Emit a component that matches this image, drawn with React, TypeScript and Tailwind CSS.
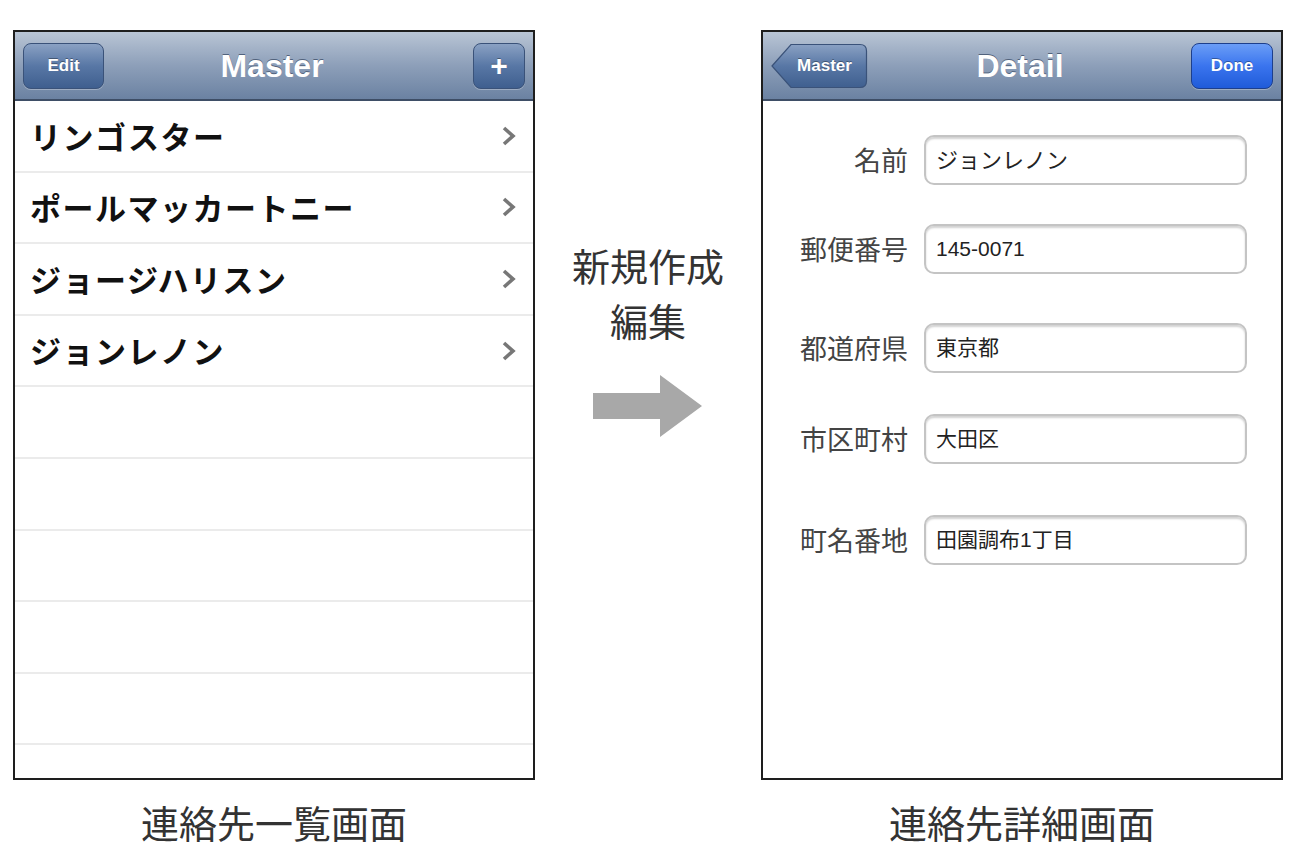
import React from "react";

const jp = "font-['Noto_Sans_CJK_JP',sans-serif]";
const ui = "font-['Liberation_Sans','Noto_Sans_CJK_JP',sans-serif]";

const names = ["リンゴスター", "ポールマッカートニー", "ジョージハリスン", "ジョンレノン"];

const fields = [
  { label: "名前", value: "ジョンレノン", gap: "", size: "text-[22px]" },
  { label: "郵便番号", value: "145-0071", gap: "mt-[39px]", size: "text-[21px]" },
  { label: "都道府県", value: "東京都", gap: "mt-[49px]", size: "text-[21px]" },
  { label: "市区町村", value: "大田区", gap: "mt-[41px]", size: "text-[21px]" },
  { label: "町名番地", value: "田園調布1丁目", gap: "mt-[51px]", size: "text-[21px]" },
];

function NavBar({ title, left, right }: { title: string; left: React.ReactNode; right: React.ReactNode }) {
  return (
    <div className="h-[69px] shrink-0 grid grid-cols-[1fr_auto_1fr] items-center px-[8px] bg-gradient-to-b from-[#b9c5d5] via-[#8d9fb9] to-[#6b82a2] border-b-2 border-[#3e4e66]">
      <div className="justify-self-start">{left}</div>
      <div className={`${ui} text-[32px] font-bold text-white [text-shadow:0_-1px_0_#51627c] -translate-x-[2px]`}>{title}</div>
      <div className="justify-self-end">{right}</div>
    </div>
  );
}

function BarButton({ children, blue, w }: { children: React.ReactNode; blue?: boolean; w: string }) {
  return (
    <div
      className={`${w} h-[46px] rounded-[8px] border flex items-center justify-center ${ui} font-bold text-white [text-shadow:0_-1px_0_rgba(0,0,0,0.35)] shadow-[0_1px_0_rgba(255,255,255,0.3)] ${
        blue
          ? "border-[#1d3f8c] bg-gradient-to-b from-[#6b9df6] via-[#3a74ee] to-[#1f5bd9]"
          : "border-[#3a5279] bg-gradient-to-b from-[#8aa1c3] via-[#5877a5] to-[#3f5f8f]"
      }`}
    >
      {children}
    </div>
  );
}

function BackButton() {
  return (
    <div className="relative w-[97px] h-[46px] flex items-center justify-center pl-[10px]">
      <svg className="absolute inset-0" width="97" height="46" viewBox="0 0 97 46">
        <defs>
          <linearGradient id="bb" x1="0" y1="0" x2="0" y2="1">
            <stop offset="0" stopColor="#8aa1c3" />
            <stop offset="0.5" stopColor="#5877a5" />
            <stop offset="1" stopColor="#3f5f8f" />
          </linearGradient>
        </defs>
        <path d="M1 23 L20 1.5 H89 Q95.5 1.5 95.5 8 V38 Q95.5 44.5 89 44.5 H20 Z" fill="url(#bb)" stroke="#3a5279" strokeWidth="1.2" />
      </svg>
      <span className={`relative ${ui} text-[17px] font-bold text-white [text-shadow:0_-1px_0_rgba(0,0,0,0.35)]`}>Master</span>
    </div>
  );
}

function Chevron() {
  return (
    <svg width="16" height="22" viewBox="0 0 16 22">
      <polyline points="3,3 12,11 3,19" fill="none" stroke="#777" strokeWidth="3.6" />
    </svg>
  );
}

function MasterScreen() {
  return (
    <div className="w-[522px] h-[750px] border-2 border-[#1e1e1e] flex flex-col bg-white overflow-hidden">
      <NavBar
        title="Master"
        left={<BarButton w="w-[81px]"><span className="text-[17px]">Edit</span></BarButton>}
        right={<BarButton w="w-[52px]"><span className="text-[30px] leading-none">+</span></BarButton>}
      />
      {Array.from({ length: 10 }, (_, i) => (
        <div key={i} className="h-[71.6px] shrink-0 border-b-2 border-[#ebebeb] flex items-center justify-between pl-[15px] pr-[16px]">
          <span className={`${jp} text-[31px] font-bold text-[#111] tracking-[1.5px]`}>{names[i] ?? ""}</span>
          {names[i] && <Chevron />}
        </div>
      ))}
    </div>
  );
}

function DetailScreen() {
  return (
    <div className="w-[522px] h-[750px] border-2 border-[#1e1e1e] flex flex-col bg-white overflow-hidden">
      <NavBar
        title="Detail"
        left={<BackButton />}
        right={<BarButton blue w="w-[82px]"><span className="text-[17px]">Done</span></BarButton>}
      />
      <div className="flex flex-col pt-[34px]">
        {fields.map((f) => (
          <div key={f.label} className={`flex items-center gap-[16px] ${f.gap}`}>
            <div className={`w-[145px] text-right ${jp} text-[27px] text-[#444]`}>{f.label}</div>
            <div className="w-[323px] h-[50px] rounded-[10px] border-2 border-[#c4c4c4] shadow-[inset_0_2px_2px_rgba(0,0,0,0.18)] flex items-center px-[10px]">
              <span className={`${ui} ${f.size} text-[#222]`}>{f.value}</span>
            </div>
          </div>
        ))}
      </div>
    </div>
  );
}

export default function App() {
  return (
    <div className="w-[1300px] h-[867px] bg-white flex pt-[30px] pl-[13px]">
      <div className="flex flex-col items-center">
        <MasterScreen />
        <div className={`${jp} text-[38px] leading-[48px] text-[#333] mt-[18px]`}>連絡先一覧画面</div>
      </div>

      <div className="w-[226px] flex flex-col items-center pt-[207px]">
        <div className={`${jp} text-[38px] leading-[55px] text-[#333] text-center`}>
          <div>新規作成</div>
          <div>編集</div>
        </div>
        <svg className="mt-[28px]" width="110" height="62" viewBox="0 0 110 62">
          <polygon points="0,18 67,18 67,0 109,31 67,62 67,44 0,44" fill="#a8a8a8" />
        </svg>
      </div>

      <div className="flex flex-col items-center">
        <DetailScreen />
        <div className={`${jp} text-[38px] leading-[48px] text-[#333] mt-[18px]`}>連絡先詳細画面</div>
      </div>
    </div>
  );
}
